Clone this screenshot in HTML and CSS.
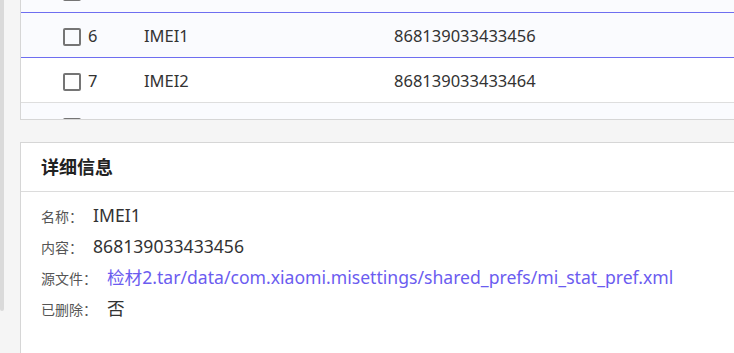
FILE: index.html
```html
<!DOCTYPE html>
<html lang="zh-CN">
<head>
  <meta charset="UTF-8" />
  <title>详细信息</title>
  <link rel="stylesheet" href="styles.css">
</head>
<body>
<div class="page">
  <!-- 左侧滚动条 -->
  <div class="rail"><div class="thumb"></div></div>

  <div class="main">
    <!-- 列表（已滚动，上下两行只露出复选框边缘） -->
    <div class="panel list-panel">
      <div class="list">
        <div class="row stripe">
          <span class="check"></span>
        </div>
        <div class="row stripe selected">
          <span class="check"></span><span class="idx">6</span><span class="name">IMEI1</span><span class="val">868139033433456</span>
        </div>
        <div class="row">
          <span class="check"></span><span class="idx">7</span><span class="name">IMEI2</span><span class="val">868139033433464</span>
        </div>
        <div class="row stripe">
          <span class="check"></span>
        </div>
      </div>
    </div>

    <!-- 详细信息 -->
    <div class="panel detail-panel">
      <div class="detail-head">详细信息</div>
      <div class="detail-body">
        <div class="field"><span class="label">名称：</span><span class="value">IMEI1</span></div>
        <div class="field"><span class="label">内容：</span><span class="value">868139033433456</span></div>
        <div class="field"><span class="label">源文件：</span><a class="value link" href="#">检材2.tar/data/com.xiaomi.misettings/shared_prefs/mi_stat_pref.xml</a></div>
        <div class="field"><span class="label">已删除：</span><span class="value">否</span></div>
      </div>
    </div>
  </div>
</div>
</body>
</html>
```
FILE: styles.css
```css
body {
  margin: 0;
  background: #f5f5f5;
  font-family: 'Noto Sans', 'Noto Sans CJK SC', sans-serif;
  color: #333;
  overflow: hidden;
}

.page {
  display: flex;
  height: 353px;
}

/* 滚动条 */
.rail {
  width: 5px;
  flex-shrink: 0;
}

.thumb {
  width: 4px;
  height: 311px;
  background: #dadada;
  border-radius: 0 0 3px 3px;
}

.main {
  flex: 1;
  padding-left: 15px;
  display: flex;
  flex-direction: column;
  gap: 22px;
}

.panel {
  background: #fff;
  border: 1px solid #d6d6d6;
  border-right: none;
}

/* 列表 */
.list-panel {
  border-top: none;
  height: 119px;
  overflow: hidden;
}

.list {
  margin-top: -32px;
}

.row {
  box-sizing: border-box;
  display: flex;
  align-items: center;
  height: 45px;
  border-bottom: 1px solid #dedede;
  font-size: 16.5px;
  position: relative;
}

.row.stripe {
  background: #fafbfe;
}

.row.selected {
  border-top: 1px solid #6e6ef0;
  border-bottom-color: #6e6ef0;
  margin-top: -1px;
  height: 46px;
}

.check {
  box-sizing: border-box;
  width: 18px;
  height: 18px;
  border: 2px solid #757575;
  border-radius: 2px;
  margin-left: 42px;
  margin-top: 3px;
}

.idx {
  width: 56px;
  padding-left: 7px;
}

.name {
  width: 250px;
}

/* 详细信息 */
.detail-panel {
  flex: 1;
  border-bottom: none;
}

.detail-head {
  height: 48px;
  line-height: 48px;
  padding-left: 20px;
  font-size: 18px;
  font-weight: bold;
  color: #222;
  border-bottom: 1px solid #dcdcdc;
}

.detail-body {
  padding: 8px 20px;
}

.field {
  display: flex;
  align-items: baseline;
  height: 31px;
  line-height: 31px;
}

.label {
  font-size: 14px;
  color: #555;
  margin-right: 10px;
}

.value {
  font-size: 17.6px;
  color: #333;
}

.link {
  color: #6b5cf0;
  text-decoration: none;
}
```
